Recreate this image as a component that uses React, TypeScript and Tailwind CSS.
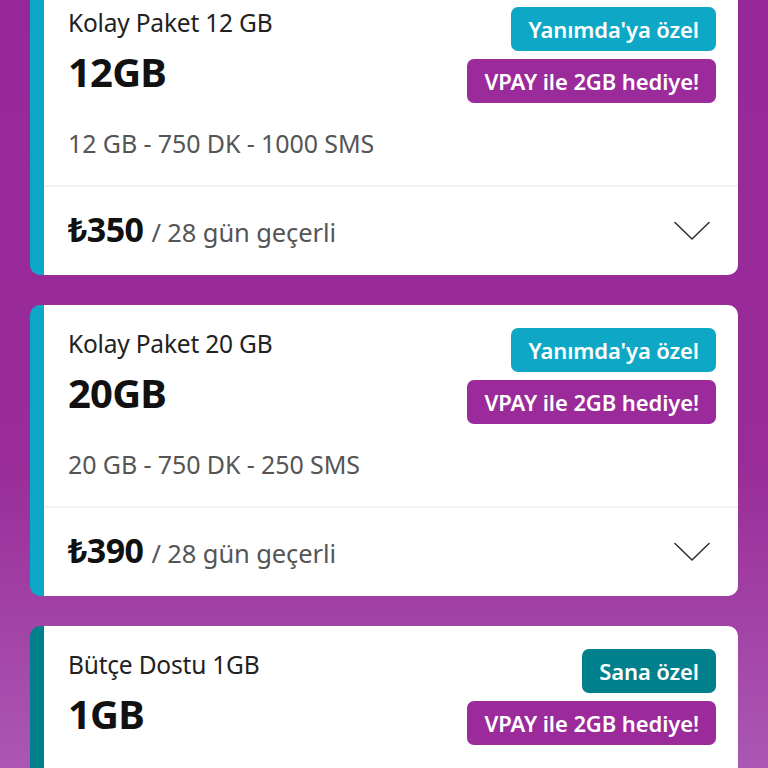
import React from 'react';

interface Badge {
    label: string;
    color: string;
}

interface Plan {
    id: number;
    title: string;
    amount: string;
    details: string;
    price: string;
    stripe: string;
    badges: Badge[];
}

const plans: Plan[] = [
    {
        id: 1,
        title: 'Kolay Paket 12 GB',
        amount: '12GB',
        details: '12 GB - 750 DK - 1000 SMS',
        price: '₺350',
        stripe: 'border-[#0aa8c6]',
        badges: [
            { label: "Yanımda'ya özel", color: 'bg-[#0ea8c6]' },
            { label: 'VPAY ile 2GB hediye!', color: 'bg-[#9b2a9b]' },
        ],
    },
    {
        id: 2,
        title: 'Kolay Paket 20 GB',
        amount: '20GB',
        details: '20 GB - 750 DK - 250 SMS',
        price: '₺390',
        stripe: 'border-[#0aa8c6]',
        badges: [
            { label: "Yanımda'ya özel", color: 'bg-[#0ea8c6]' },
            { label: 'VPAY ile 2GB hediye!', color: 'bg-[#9b2a9b]' },
        ],
    },
    {
        id: 3,
        title: 'Bütçe Dostu 1GB',
        amount: '1GB',
        details: '1 GB - 250 DK - 250 SMS',
        price: '₺190',
        stripe: 'border-[#007f8d]',
        badges: [
            { label: 'Sana özel', color: 'bg-[#007f8d]' },
            { label: 'VPAY ile 2GB hediye!', color: 'bg-[#9b2a9b]' },
        ],
    },
];

const Chevron = () => (
    <svg width="36" height="20" viewBox="0 0 36 20" fill="none">
        <path d="M1 1.5 L18 18 L35 1.5" stroke="#333" strokeWidth="1.6" strokeLinecap="round" strokeLinejoin="round" />
    </svg>
);

const PlanCard = ({ plan }: { plan: Plan }) => (
    <div className={`shrink-0 bg-white rounded-[10px] border-l-[14px] ${plan.stripe} overflow-hidden`}>
        <div className="flex justify-between pt-[23px] pl-[24px] pr-[22px] h-[201px]">
            <div className="flex flex-col">
                <div className="text-[24.5px] leading-[30px] tracking-[-0.2px] text-[#222] mt-[1px]">{plan.title}</div>
                <div className="text-[40px] leading-[48px] font-bold tracking-[-0.8px] text-[#111] mt-[10px]">{plan.amount}</div>
                <div className="text-[25px] leading-[32px] tracking-[-0.1px] text-[#555] mt-[31px]">{plan.details}</div>
            </div>
            <div className="flex flex-col items-end gap-[8px]">
                {plan.badges.map((badge) => (
                    <span
                        key={badge.label}
                        className={`${badge.color} text-white font-semibold text-[22px] tracking-[-0.1px] h-[44px] leading-[44px] px-[17px] rounded-[7px]`}
                    >
                        {badge.label}
                    </span>
                ))}
            </div>
        </div>
        <div className="h-[2px] bg-[#f2f2f2]" />
        <div className="flex items-center justify-between h-[88px] pl-[24px] pr-[28px]">
            <div className="flex items-baseline gap-[8px] -mt-[3px]">
                <span className="text-[34px] font-bold tracking-[-0.6px] text-[#111]">{plan.price}</span>
                <span className="text-[25.5px] tracking-[-0.1px] text-[#555]">/ 28 gün geçerli</span>
            </div>
            <Chevron />
        </div>
    </div>
);

const App = () => {
    return (
        <div
            className="h-[768px] w-[768px] overflow-hidden bg-[linear-gradient(180deg,#97289a_0%,#992c98_60%,#ab57b3_100%)]"
            style={{ fontFamily: '"Noto Sans", "DejaVu Sans", sans-serif' }}
        >
            <div className="flex flex-col gap-[30px] px-[30px] -mt-[16px]">
                {plans.map((plan) => (
                    <PlanCard key={plan.id} plan={plan} />
                ))}
            </div>
        </div>
    );
};

export default App;
